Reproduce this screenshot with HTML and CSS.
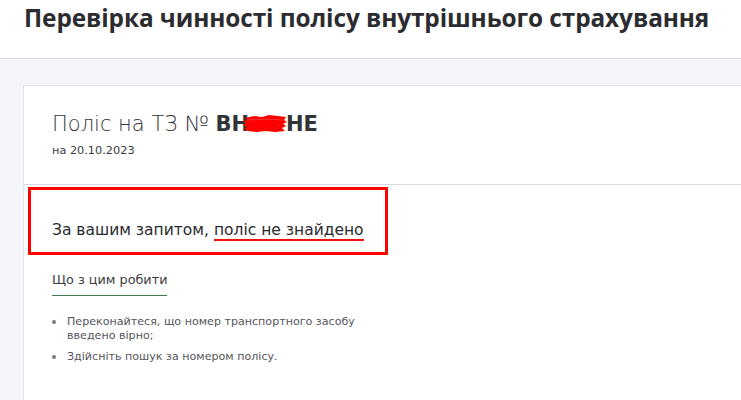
FILE: index.html
```html
<!DOCTYPE html>
<html lang="uk">
<head>
<meta charset="utf-8">
<title>Перевірка чинності полісу</title>
<link rel="stylesheet" href="styles.css">
</head>
<body>
<header class="top">
  <h1 class="page-title">Перевірка чинності полісу внутрішнього страхування</h1>
</header>
<main class="area">
  <section class="card">
    <div class="card-head">
      <div class="policy">Поліс на ТЗ № <b>ВН<span class="redact"><svg width="46" height="19" viewBox="0 0 46 19"><path d="M3 4 L12 2 L20 3 L27 1 L36 2 L44 3 L42 6 L45 8 L41 10 L44 12 L40 14 L43 17 L33 18 L24 17 L15 18 L6 17 L2 15 L5 13 L1 11 L4 9 L1 7 L5 6 Z" fill="#ff0000"/><path d="M6 6 C16 5 30 5 40 6" stroke="#ff3030" stroke-width="1" fill="none"/></svg></span>НЕ</b></div>
      <div class="date">на 20.10.2023</div>
    </div>
    <div class="card-body">
      <div class="mark">
        <p class="result">За вашим запитом, <span class="hl">поліс не знайдено</span></p>
      </div>
      <div class="what"><span class="what-link">Що з цим робити</span></div>
      <ul class="tips">
        <li>Переконайтеся, що номер транспортного засобу введено вірно;</li>
        <li>Здійсніть пошук за номером полісу.</li>
      </ul>
    </div>
  </section>
</main>
</body>
</html>
```

FILE: styles.css
```css
html, body {
  margin: 0;
  padding: 0;
  background: #ffffff;
}
body {
  font-family: "Open Sans", "Liberation Sans", sans-serif;
  color: #2f3033;
  width: 741px;
  height: 400px;
  overflow: hidden;
}
.top {
  height: 58px;
  border-bottom: 1px solid #d9dadd;
  padding-left: 24px;
}
.page-title {
  margin: 0;
  padding-top: 1px;
  font-family: "Open Sans", sans-serif;
  font-weight: 700;
  font-size: 24.4px;
  line-height: 34px;
  color: #2b2c2f;
  letter-spacing: -0.1px;
  white-space: nowrap;
}
.area {
  background: #f5f6fa;
  padding: 26px 0 0 23px;
  height: 315px;
  overflow: hidden;
}
.card {
  width: 800px;
  background: #ffffff;
  border: 1px solid #dfe3ea;
  height: 340px;
}
.card-head {
  padding: 22px 28px 0;
  height: 76px;
  border-bottom: 1px solid #d6d7da;
}
.policy {
  font-family: "DejaVu Sans", sans-serif;
  font-weight: 200;
  font-size: 21px;
  line-height: 32px;
  color: #333438;
}
.policy b {
  font-weight: 700;
}
.redact {
  display: inline-block;
  width: 37px;
  height: 19px;
  vertical-align: -2px;
  position: relative;
}
.redact svg {
  position: absolute;
  left: -7px;
  top: 0;
}
.date {
  font-family: "DejaVu Sans", sans-serif;
  font-size: 11.3px;
  line-height: 18px;
  padding-top: 2px;
  color: #3a3b3f;
}
.card-body {
  padding: 2px 0 0 4px;
}
.mark {
  width: 354px;
  height: 62px;
  border: 3px solid #ff0000;
}
.result {
  margin: 30px 0 0 21px;
  font-family: "DejaVu Sans", sans-serif;
  font-size: 15.5px;
  line-height: 20px;
  color: #2a2b2e;
}
.hl {
  border-bottom: 2px solid #ee1111;
}
.what {
  margin: 12px 0 0 24px;
}
.what-link {
  display: inline-block;
  font-family: "DejaVu Sans", sans-serif;
  font-size: 12.8px;
  line-height: 18px;
  color: #3d3d42;
  padding-bottom: 6px;
  border-bottom: 1px solid #3b7a4e;
}
.tips {
  list-style: none;
  margin: 19px 0 0 24px;
  padding: 0;
  width: 315px;
  font-family: "DejaVu Sans", sans-serif;
  font-size: 11.1px;
  line-height: 14px;
  color: #55565b;
}
.tips li {
  display: flex;
  align-items: flex-start;
  gap: 11px;
  margin-bottom: 7px;
}
.tips li::before {
  content: "";
  flex: none;
  width: 4px;
  height: 4px;
  margin-top: 5px;
  border-radius: 50%;
  background: #7a7b80;
}
```
